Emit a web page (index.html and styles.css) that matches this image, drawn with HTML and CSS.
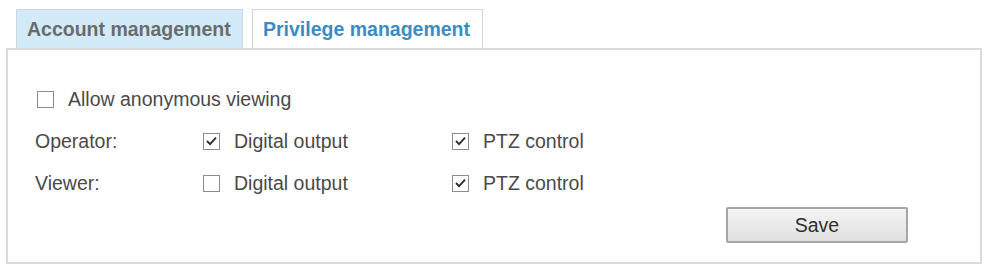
FILE: index.html
```html
<!DOCTYPE html>
<html>
<head>
<meta charset="utf-8">
<link rel="stylesheet" href="styles.css">
</head>
<body>
<div class="page">
  <div class="tabs">
    <div class="tab tab-inactive">Account management</div>
    <div class="tab tab-active">Privilege management</div>
  </div>
  <div class="panel">
    <div class="row">
      <label class="check anon">
        <span class="box"></span>
        <span>Allow anonymous viewing</span>
      </label>
    </div>
    <div class="grid">
      <div class="label">Operator:</div>
      <label class="check">
        <span class="box"><svg viewBox="0 0 16 16" width="16" height="16"><path d="M3.2 8 L6.5 11.4 L12.8 4.4" fill="none" stroke="#2e2e2e" stroke-width="2"/></svg></span>
        <span>Digital output</span>
      </label>
      <label class="check">
        <span class="box"><svg viewBox="0 0 16 16" width="16" height="16"><path d="M3.2 8 L6.5 11.4 L12.8 4.4" fill="none" stroke="#2e2e2e" stroke-width="2"/></svg></span>
        <span>PTZ control</span>
      </label>
      <div class="label">Viewer:</div>
      <label class="check">
        <span class="box"></span>
        <span>Digital output</span>
      </label>
      <label class="check">
        <span class="box"><svg viewBox="0 0 16 16" width="16" height="16"><path d="M3.2 8 L6.5 11.4 L12.8 4.4" fill="none" stroke="#2e2e2e" stroke-width="2"/></svg></span>
        <span>PTZ control</span>
      </label>
    </div>
    <div class="actions">
      <button class="save">Save</button>
    </div>
  </div>
</div>
</body>
</html>
```

FILE: styles.css
```css
html, body {
  margin: 0;
  padding: 0;
  background: #ffffff;
}

.page {
  font-family: "Liberation Sans", Arial, sans-serif;
  font-size: 19.5px;
  color: #4a4a4a;
  width: 984px;
  height: 265px;
  overflow: hidden;
}

.tabs {
  display: flex;
  gap: 9px;
  padding: 9px 0 0 16px;
  height: 39px;
}

.tab {
  box-sizing: border-box;
  height: 39px;
  padding: 0 10px;
  display: flex;
  align-items: center;
  font-weight: bold;
  border: 1px solid #cfd6dc;
  border-bottom: none;
}

.tab-inactive {
  width: 227px;
  background: #d3ebf8;
  color: #6a6b6d;
}

.tab-active {
  width: 231px;
  background: #ffffff;
  color: #3b8cc4;
  border-color: #d4d4d4;
}

.panel {
  box-sizing: border-box;
  margin-left: 6px;
  width: 976px;
  height: 216px;
  border: 2px solid #dadada;
  padding: 28px 0 0 27px;
}

.row {
  height: 42px;
  display: flex;
  align-items: center;
}

.check {
  display: flex;
  align-items: center;
  gap: 14px;
}

.anon {
  margin-left: 2px;
}

.box {
  box-sizing: border-box;
  width: 17px;
  height: 17px;
  border: 1px solid #8c8c8c;
  background: #fff;
  display: flex;
  align-items: center;
  justify-content: center;
  flex: none;
}

.box svg {
  display: block;
}

.grid {
  display: grid;
  grid-template-columns: 168px 249px auto;
  grid-auto-rows: 42px;
  align-items: center;
}

.actions {
  display: flex;
  justify-content: flex-end;
  padding-right: 72px;
  margin-top: 3px;
}

.save {
  box-sizing: border-box;
  width: 182px;
  height: 36px;
  font-family: "Liberation Sans", Arial, sans-serif;
  font-size: 19.5px;
  color: #2f2f2f;
  background: linear-gradient(#f4f4f4, #e0e0e0);
  border: 2px solid #a5a5a5;
  border-radius: 2px;
  padding: 0;
}
```
